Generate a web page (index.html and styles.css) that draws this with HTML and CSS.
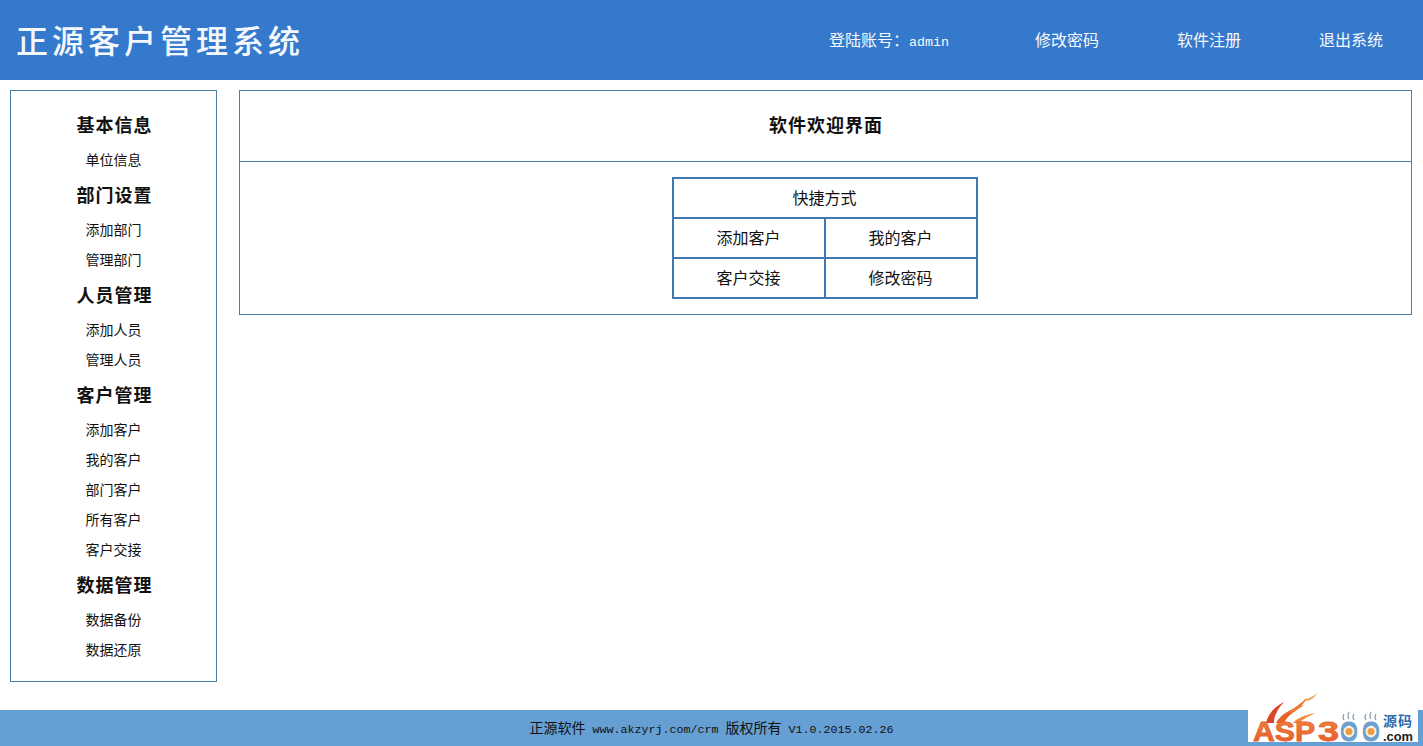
FILE: index.html
```
<!DOCTYPE html>
<html lang="zh-CN">
<head>
<meta charset="utf-8">
<title>正源客户管理系统</title>
<link rel="stylesheet" href="styles.css">
</head>
<body>
<header class="top">
  <h1 class="brand">正源客户管理系统</h1>
  <nav class="topnav">
    <span class="acct">登陆账号：<span class="lat">admin</span></span>
    <a class="tn" href="#">修改密码</a>
    <a class="tn" href="#">软件注册</a>
    <a class="tn" href="#">退出系统</a>
  </nav>
</header>
<div class="content">
  <aside class="side">
    <div class="gh">基本信息</div>
    <a class="si" href="#">单位信息</a>
    <div class="gh">部门设置</div>
    <a class="si" href="#">添加部门</a>
    <a class="si" href="#">管理部门</a>
    <div class="gh">人员管理</div>
    <a class="si" href="#">添加人员</a>
    <a class="si" href="#">管理人员</a>
    <div class="gh">客户管理</div>
    <a class="si" href="#">添加客户</a>
    <a class="si" href="#">我的客户</a>
    <a class="si" href="#">部门客户</a>
    <a class="si" href="#">所有客户</a>
    <a class="si" href="#">客户交接</a>
    <div class="gh">数据管理</div>
    <a class="si" href="#">数据备份</a>
    <a class="si" href="#">数据还原</a>
  </aside>
  <main class="main">
    <div class="mtitle">软件欢迎界面</div>
    <div class="mbody">
      <div class="quick">
        <div class="qh">快捷方式</div>
        <a class="qc" href="#">添加客户</a>
        <a class="qc qr" href="#">我的客户</a>
        <a class="qc" href="#">客户交接</a>
        <a class="qc qr" href="#">修改密码</a>
      </div>
    </div>
  </main>
</div>
<footer class="foot"><span>正源软件</span><span class="lat">www.akzyrj.com/crm</span><span>版权所有</span><span class="lat">V1.0.2015.02.26</span></footer>
<div class="logo">
  <svg width="170" height="56" viewBox="0 0 170 56">
    <defs>
      <linearGradient id="asp" x1="0" y1="0" x2="0" y2="1">
        <stop offset="0" stop-color="#f0883f"/>
        <stop offset="1" stop-color="#e5562c"/>
      </linearGradient>
    </defs>
    <path d="M18 33C20 24 26 17 36 12C30 19 26 25 26 33Z" fill="#d9472a"/>
    <path d="M28 33C32 25 42 19 56 15C47 21 39 26 36 33Z" fill="#e9622c"/>
    <path d="M45 33C49 28 57 25 67 23C60 27 54 29 52 33Z" fill="#f08a3c"/>
    <path d="M41 22C46 18 53 13 59 8C56 14 50 20 44 23Z" fill="#ee7a34"/>
    <path d="M56 9C60 9 65 7 69 3C67 8 62 11 57 11Z" fill="#f2a55c"/>
    <text class="lg-asp" x="5" y="51" textLength="62" lengthAdjust="spacingAndGlyphs">ASP</text>
    <text class="lg-asp" x="70" y="51" textLength="21" lengthAdjust="spacingAndGlyphs">3</text>
    <text class="lg-zero" x="92" y="51" textLength="18" lengthAdjust="spacingAndGlyphs">0</text>
    <text class="lg-zero" x="114" y="51" textLength="18" lengthAdjust="spacingAndGlyphs">0</text>
    <circle cx="101" cy="41.5" r="5.5" fill="#f6f3e6"/>
    <circle cx="101" cy="41.5" r="3.5" fill="#ef9a3f"/>
    <circle cx="123" cy="41.5" r="5.5" fill="#f6f3e6"/>
    <circle cx="123" cy="41.5" r="3.5" fill="#ef9a3f"/>
    <path d="M96 30q-2-3 0-6M101 29q-2-3 0-7M106 30q-2-3 0-6M118 30q-2-3 0-6M123 29q-2-3 0-7M128 30q-2-3 0-6" fill="none" stroke="#8a9aa8" stroke-width="1.2"/>
    <text class="lg-yuan" x="135" y="36">源码</text>
    <text class="lg-com" x="135" y="51" textLength="30" lengthAdjust="spacingAndGlyphs">.com</text>
  </svg>
</div>
</body>
</html>
```
FILE: styles.css
```
* { box-sizing: border-box; }
html, body { margin: 0; padding: 0; }
body {
  width: 1423px;
  height: 746px;
  overflow: hidden;
  position: relative;
  display: flex;
  flex-direction: column;
  background: #fff;
  color: #111;
  font-family: "Noto Sans CJK SC", "Liberation Sans", sans-serif;
  font-size: 14px;
}
a { color: inherit; text-decoration: none; }
.lat { font-family: "Liberation Mono", monospace; font-size: 11.67px; }

.top {
  height: 80px;
  flex: none;
  background: #3579cc;
  color: #f6f9fd;
  display: flex;
  align-items: center;
  justify-content: space-between;
  padding-bottom: 2px;
}
.brand {
  margin: 0 0 0 16px;
  font-size: 32px;
  line-height: 40px;
  font-weight: 500;
  letter-spacing: 4px;
  color: #f4f8fc;
}
.topnav { display: flex; align-items: center; margin-right: 39px; font-size: 16px; }
.acct { width: 206px; }
.acct .lat { font-size: 13.33px; }
.tn { width: 142px; text-align: left; }
.tn:last-child { width: 65px; }

.content {
  flex: 1;
  display: flex;
  align-items: flex-start;
  gap: 22px;
  padding: 10px 11px 0 10px;
}
.side {
  width: 207px;
  height: 592px;
  flex: none;
  border: 1px solid #4a7fa8;
  padding-top: 13px;
  text-align: center;
}
.gh {
  height: 40px;
  line-height: 40px;
  font-size: 18px;
  font-weight: 700;
  letter-spacing: 1px;
  padding-left: 2px;
}
.si {
  display: block;
  height: 30px;
  line-height: 30px;
  font-size: 14px;
}
.main {
  flex: 1;
  height: 225px;
  border: 1px solid #4a7fa8;
}
.mtitle {
  height: 71px;
  line-height: 66px;
  text-align: center;
  font-size: 18px;
  font-weight: 700;
  letter-spacing: 1px;
  padding-left: 1px;
  border-bottom: 1px solid #4a7fa8;
}
.mbody { display: flex; justify-content: center; padding: 15px 2px 0 0; }
.quick {
  width: 306px;
  display: grid;
  grid-template-columns: 152px 1fr;
  border: 2px solid #3f78b2;
  font-size: 16px;
}
.qh {
  grid-column: 1 / 3;
  height: 40px;
  line-height: 36px;
  text-align: center;
  border-bottom: 2px solid #3f78b2;
}
.qc {
  height: 40px;
  line-height: 36px;
  text-align: center;
  border-bottom: 2px solid #3f78b2;
  border-right: 2px solid #3f78b2;
}
.qr { border-right: 0; }
.qc:nth-last-child(-n+2) { height: 38px; border-bottom: 0; }

.foot {
  height: 36px;
  flex: none;
  background: #659fd3;
  display: flex;
  justify-content: center;
  align-items: baseline;
  gap: 7px;
  line-height: 34px;
  font-size: 14px;
  color: #111;
}

.logo {
  position: absolute;
  left: 1248px;
  top: 690px;
  width: 170px;
  height: 56px;
}
.logo svg {
  display: block;
  background: linear-gradient(to bottom, transparent 20px, #fff 20px, #fff 52px, transparent 52px);
}
.lg-asp { font-family: "Liberation Sans", sans-serif; font-size: 28px; font-weight: 700; fill: url(#asp); stroke: #e8642e; stroke-width: 0.8px; }
.lg-zero { font-family: "Liberation Sans", sans-serif; font-size: 28px; font-weight: 700; fill: #6f9fcc; stroke: #6f9fcc; stroke-width: 0.8px; }
.lg-yuan { font-family: "Noto Sans CJK SC", sans-serif; font-size: 14px; font-weight: 700; letter-spacing: 1px; fill: #2f6db0; }
.lg-com { font-family: "Liberation Sans", sans-serif; font-size: 12px; font-weight: 700; fill: #222; }
```
